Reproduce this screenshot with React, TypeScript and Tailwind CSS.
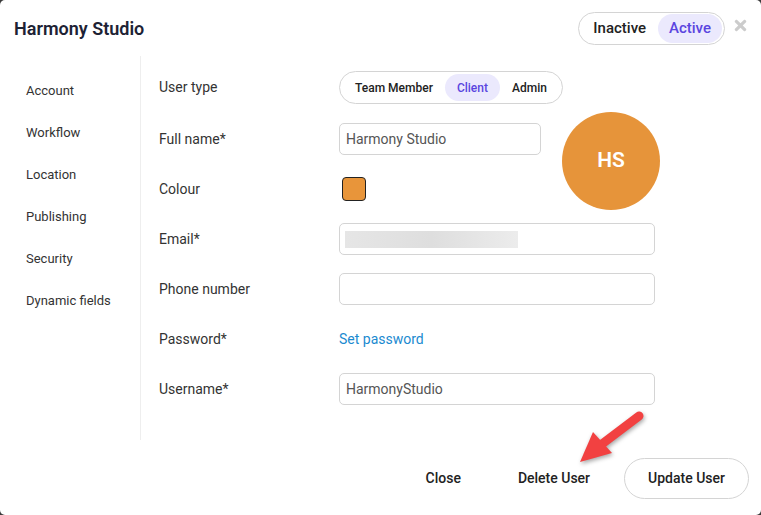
import { FaTimes } from 'react-icons/fa';

const font = { fontFamily: 'Roboto, "Liberation Sans", sans-serif' };

function Row({ label, children, className = '' }: { label: string; children?: React.ReactNode; className?: string }) {
  return (
    <div className={`flex items-center h-[50px] ${className}`}>
      <div className="w-[180px] shrink-0 text-[14px] text-[#333]">{label}</div>
      {children}
    </div>
  );
}

function TextInput({ value = '', width = 'w-[316px]' }: { value?: string; width?: string }) {
  return (
    <div className={`${width} h-[32px] border border-[#d4d4d4] rounded-[5px] flex items-center px-[6px] text-[14px] text-[#555]`}>
      {value}
    </div>
  );
}

export default function App() {
  const nav = ['Account', 'Workflow', 'Location', 'Publishing', 'Security', 'Dynamic fields'];
  const types = ['Team Member', 'Client', 'Admin'];

  return (
    <div className="w-[761px] h-[515px] bg-[#3a3a3a] overflow-hidden" style={font}>
      <div className="relative w-full h-full bg-white rounded-[5px] flex flex-col">
        {/* header */}
        <div className="h-[56px] flex items-center pl-[14px] pr-[12px] shrink-0">
          <h1 className="text-[18px] font-semibold text-[#1d2234] flex-1">Harmony Studio</h1>
          <div className="flex items-center h-[33px] border border-[#d4d4d4] rounded-full px-[2px] mr-[7px]">
            <span className="px-[12px] text-[15px] font-medium text-[#222]">Inactive</span>
            <span className="px-[11px] h-[29px] flex items-center rounded-full bg-[#ebe9fd] text-[15px] font-medium text-[#5a45e0]">Active</span>
          </div>
          <FaTimes className="text-[#cccccc] w-[17px] h-[17px] -mt-[6px]" />
        </div>

        {/* body */}
        <div className="flex h-[384px] shrink-0">
          <div className="w-[141px] border-r border-[#eeeeee] pt-[14px] pl-[26px] shrink-0">
            {nav.map((n) => (
              <div key={n} className="h-[42px] flex items-center text-[13px] text-[#333]">{n}</div>
            ))}
          </div>

          <div className="pl-[18px] pt-[5px] flex-1">
            <Row label="User type" className="h-[53px]">
              <div className="flex items-center h-[33px] border border-[#d4d4d4] rounded-full px-[3px]">
                {types.map((t) => (
                  <span
                    key={t}
                    className={`px-[12px] h-[27px] flex items-center rounded-full text-[12px] font-medium ${
                      t === 'Client' ? 'bg-[#ebe9fd] text-[#5a45e0]' : 'text-[#222]'
                    }`}
                  >
                    {t}
                  </span>
                ))}
              </div>
            </Row>

            <div className="flex items-center">
              <div className="w-[382px]">
                <Row label="Full name*">
                  <TextInput value="Harmony Studio" width="w-[202px]" />
                </Row>
                <Row label="Colour">
                  <div className="ml-[3px] w-[24px] h-[24px] rounded-[4px] border border-[#222] bg-[#e8953a]" />
                </Row>
              </div>
              <div className="ml-[21px] -mt-[6px] w-[98px] h-[98px] rounded-full bg-[#e6943a] flex items-center justify-center text-white text-[21px] font-semibold">
                HS
              </div>
            </div>

            <Row label="Email*">
              <div className="w-[316px] h-[32px] border border-[#d4d4d4] rounded-[5px] flex items-center px-[5px]">
                <div className="w-[173px] h-[17px] bg-gradient-to-r from-[#e6e6e6] via-[#dedede] to-[#ececec]" />
              </div>
            </Row>
            <Row label="Phone number">
              <TextInput />
            </Row>
            <Row label="Password*">
              <span className="text-[14px] text-[#1b8ad0]">Set password</span>
            </Row>
            <Row label="Username*">
              <TextInput value="HarmonyStudio" />
            </Row>
          </div>
        </div>

        {/* footer */}
        <div className="flex-1 flex items-center justify-end gap-[11px] pr-[12px] pt-[2px]">
          <button className="px-[23px] h-[41px] whitespace-nowrap text-[14px] font-medium text-[#222]">Close</button>
          <button className="px-[23px] h-[41px] whitespace-nowrap text-[14px] font-medium text-[#222]">Delete User</button>
          <button className="px-[23px] h-[41px] whitespace-nowrap rounded-full border border-[#d4d4d4] text-[14px] font-medium text-[#222]">
            Update User
          </button>
        </div>

        {/* annotation arrow */}
        <svg
          className="absolute left-[570px] top-[405px] w-[80px] h-[65px]"
          viewBox="0 0 80 65"
          style={{ filter: 'drop-shadow(1px 2px 2px rgba(0,0,0,0.35))' }}
        >
          <line x1="69" y1="11" x2="32" y2="39" stroke="#f24141" strokeWidth="9" strokeLinecap="round" />
          <polygon points="10,57 23,27 42,48" fill="#f24141" />
        </svg>
      </div>
    </div>
  );
}
